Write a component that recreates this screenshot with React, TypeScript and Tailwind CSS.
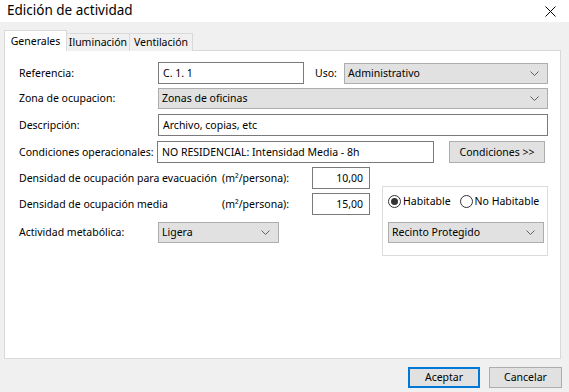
import React, { useState } from 'react';

const FONT = { fontFamily: '"Noto Sans", "Open Sans", sans-serif' };

// thin windows-style chevron
const Chevron = () => (
  <svg width="9" height="5" viewBox="0 0 9 5" className="shrink-0">
    <path d="M0.5 0.5 L4.5 4.5 L8.5 0.5" fill="none" stroke="#606060" strokeWidth="1" />
  </svg>
);

const Select = ({ value, className }: { value: string; className: string }) => (
  <div className={`flex items-center justify-between bg-[#e1e1e1] border border-[#adadad] pl-[3px] pr-[8px] ${className}`}>
    <span>{value}</span>
    <Chevron />
  </div>
);

const Input = ({ value, className }: { value: string; className: string }) => (
  <div className={`flex items-center bg-white border border-[#7a7a7a] px-[4px] ${className}`}>{value}</div>
);

const Radio = ({ checked, label }: { checked: boolean; label: string }) => (
  <div className="flex items-center gap-[2px]">
    <div className="w-[13px] h-[13px] rounded-full border border-[#333] flex items-center justify-center bg-white">
      {checked && <div className="w-[7px] h-[7px] rounded-full bg-[#333]" />}
    </div>
    <span>{label}</span>
  </div>
);

const App: React.FC = () => {
  const [tab] = useState('Generales');
  const tabs = ['Generales', 'Iluminación', 'Ventilación'];

  return (
    <div className="w-[569px] h-[392px] bg-[#f0f0f0] text-[10.5px] leading-none text-black flex flex-col overflow-hidden whitespace-nowrap" style={FONT}>
      {/* Title bar */}
      <div className="h-[22px] bg-white flex items-center justify-between pl-[7px] pr-[13px] shrink-0">
        <span className="text-[13.5px]">Edición de actividad</span>
        <svg width="11" height="11" viewBox="0 0 11 11">
          <path d="M0.5 0.5 L10.5 10.5 M10.5 0.5 L0.5 10.5" stroke="#000" strokeWidth="1" />
        </svg>
      </div>

      {/* Tabs */}
      <div className="flex items-end px-[4px] mt-[8px] h-[21px] relative z-10">
        {tabs.map((t) => (
          <div
            key={t}
            className={
              t === tab
                ? 'h-[21px] w-[63px] bg-white border border-b-0 border-[#d9d9d9] flex items-center justify-center'
                : 'h-[18px] w-[63px] bg-[#f0f0f0] border border-b-0 border-l-0 border-[#d9d9d9] flex items-center justify-center'
            }
          >
            {t}
          </div>
        ))}
      </div>

      {/* Panel */}
      <div className="ml-[4px] w-[557px] h-[309px] -mt-px bg-white border border-[#d9d9d9] pl-[14px] pt-[11px] shrink-0">
        <div className="flex items-center h-[22px]">
          <span className="w-[139px]">Referencia:</span>
          <Input value="C. 1. 1" className="w-[146px] h-[22px]" />
          <span className="ml-[11px] w-[29px]">Uso:</span>
          <Select value="Administrativo" className="w-[204px] h-[21px]" />
        </div>
        <div className="flex items-center h-[21px] mt-[4px]">
          <span className="w-[139px]">Zona de ocupacion:</span>
          <Select value="Zonas de oficinas" className="w-[390px] h-[21px]" />
        </div>
        <div className="flex items-center h-[22px] mt-[5px]">
          <span className="w-[139px]">Descripción:</span>
          <Input value="Archivo, copias, etc" className="w-[390px] h-[22px]" />
        </div>
        <div className="flex items-center h-[22px] mt-[5px]">
          <span className="w-[138px]">Condiciones operacionales:</span>
          <Input value="NO RESIDENCIAL: Intensidad Media - 8h" className="w-[277px] h-[22px]" />
          <div className="ml-[15px] w-[96px] h-[22px] bg-[#e1e1e1] border border-[#adadad] flex items-center justify-center">
            Condiciones &gt;&gt;
          </div>
        </div>

        <div className="flex mt-[4px]">
          <div className="flex flex-col">
            <div className="flex items-center h-[22px]">
              <span className="w-[203px]">Densidad de ocupación para evacuación</span>
              <span className="w-[90px]">(m²/persona):</span>
              <div className="w-[58px] h-[22px] border border-[#7a7a7a] flex items-center justify-end pr-[6px]">10,00</div>
            </div>
            <div className="flex items-center h-[22px] mt-[4px]">
              <span className="w-[203px]">Densidad de ocupación media</span>
              <span className="w-[90px]">(m²/persona):</span>
              <div className="w-[58px] h-[22px] border border-[#7a7a7a] flex items-center justify-end pr-[6px]">15,00</div>
            </div>
            <div className="flex items-center h-[21px] mt-[7px]">
              <span className="w-[139px]">Actividad metabólica:</span>
              <Select value="Ligera" className="w-[121px] h-[21px]" />
            </div>
          </div>
          <div className="ml-[12px] mt-[19px] w-[166px] h-[70px] border border-[#dcdcdc] pl-[5px] pt-[7px] flex flex-col">
            <div className="flex items-center gap-[9px] h-[14px]">
              <Radio checked label="Habitable" />
              <Radio checked={false} label="No Habitable" />
            </div>
            <Select value="Recinto Protegido" className="w-[156px] h-[21px] mt-[14px]" />
          </div>
        </div>
      </div>

      {/* Buttons */}
      <div className="flex justify-end gap-[9px] pr-[7px] mt-[8px]">
        <div className="w-[72px] h-[21px] bg-[#e1e1e1] border-2 border-[#0078d7] flex items-center justify-center">Aceptar</div>
        <div className="w-[73px] h-[21px] bg-[#e1e1e1] border border-[#adadad] flex items-center justify-center">Cancelar</div>
      </div>
    </div>
  );
};

export default App;
